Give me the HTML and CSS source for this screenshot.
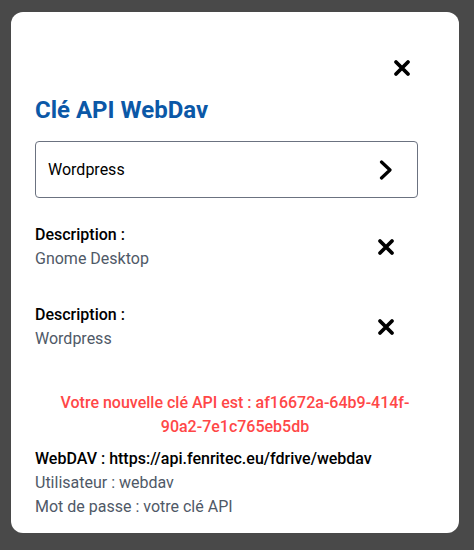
FILE: index.html
```html
<!DOCTYPE html>
<html lang="fr">
<head>
    <meta charset="UTF-8">
    <meta name="viewport" content="width=device-width, initial-scale=1.0">
    <title>Clé API WebDav</title>
    <link rel="stylesheet" href="styles.css">
</head>
<body>
    <div class="modal">
        <div class="modal-top">
            <button class="icon-btn close-btn" aria-label="Fermer">
                <svg width="18" height="18" viewBox="0 0 18 18"><path d="M3 3 L15 15 M15 3 L3 15" stroke="#000" stroke-width="3.8" stroke-linecap="round" fill="none"/></svg>
            </button>
        </div>
        <h2 class="title">Clé API WebDav</h2>

        <div class="select-box">
            <span>Wordpress</span>
            <svg width="14" height="20" viewBox="0 0 14 20"><path d="M2.5 2 L11 10 L2.5 18" stroke="#000" stroke-width="3.2" stroke-linecap="round" stroke-linejoin="round" fill="none"/></svg>
        </div>

        <div class="key-list">
            <div class="key-row">
                <div>
                    <div class="label">Description :</div>
                    <div class="value">Gnome Desktop</div>
                </div>
                <button class="icon-btn" aria-label="Supprimer">
                    <svg width="18" height="18" viewBox="0 0 18 18"><path d="M3 3 L15 15 M15 3 L3 15" stroke="#000" stroke-width="3.8" stroke-linecap="round" fill="none"/></svg>
                </button>
            </div>
            <div class="key-row">
                <div>
                    <div class="label">Description :</div>
                    <div class="value">Wordpress</div>
                </div>
                <button class="icon-btn" aria-label="Supprimer">
                    <svg width="18" height="18" viewBox="0 0 18 18"><path d="M3 3 L15 15 M15 3 L3 15" stroke="#000" stroke-width="3.8" stroke-linecap="round" fill="none"/></svg>
                </button>
            </div>
        </div>

        <p class="new-key">Votre nouvelle clé API est : af16672a-64b9-414f-90a2-7e1c765eb5db</p>

        <div class="webdav">
            <div class="label">WebDAV : https://api.fenritec.eu/fdrive/webdav</div>
            <div class="value">Utilisateur : webdav</div>
            <div class="value">Mot de passe : votre clé API</div>
        </div>
    </div>
</body>
</html>
```

FILE: styles.css
```css
body {
    font-family: Roboto, "Liberation Sans", sans-serif;
    margin: 0;
    padding: 12px 0 0 11px;
    background-color: #494949;
    color: #000;
    font-size: 16px;
    line-height: 24px;
    height: 550px;
    box-sizing: border-box;
    overflow: hidden;
}
.modal {
    width: 448px;
    box-sizing: border-box;
    background-color: #fff;
    border-radius: 12px;
    padding: 24px 24px 14px 24px;
}
.modal-top {
    display: flex;
    justify-content: flex-end;
    padding: 23px 24px 0 0;
}
.icon-btn {
    border: none;
    background: none;
    padding: 0;
    display: flex;
    cursor: pointer;
}
.title {
    margin: 17px 0 0 0;
    font-size: 24px;
    line-height: 32px;
    font-weight: 700;
    color: #0b58a7;
}
.select-box {
    margin-top: 15px;
    width: 383px;
    height: 57px;
    box-sizing: border-box;
    border: 1px solid #6b7280;
    border-radius: 4px;
    display: flex;
    align-items: center;
    justify-content: space-between;
    padding: 0 24px 0 12px;
}
.key-list {
    margin-top: 25px;
    width: 383px;
    display: flex;
    flex-direction: column;
    gap: 32px;
}
.key-row {
    display: flex;
    align-items: center;
    justify-content: space-between;
    padding-right: 23px;
}
.label {
    font-weight: 500;
}
.value {
    color: #4f5967;
}
.new-key {
    margin: 40px 0 0 0;
    padding: 0 12px;
    text-align: center;
    color: #ff4747;
    font-weight: 500;
}
.webdav {
    margin-top: 8px;
}
```
